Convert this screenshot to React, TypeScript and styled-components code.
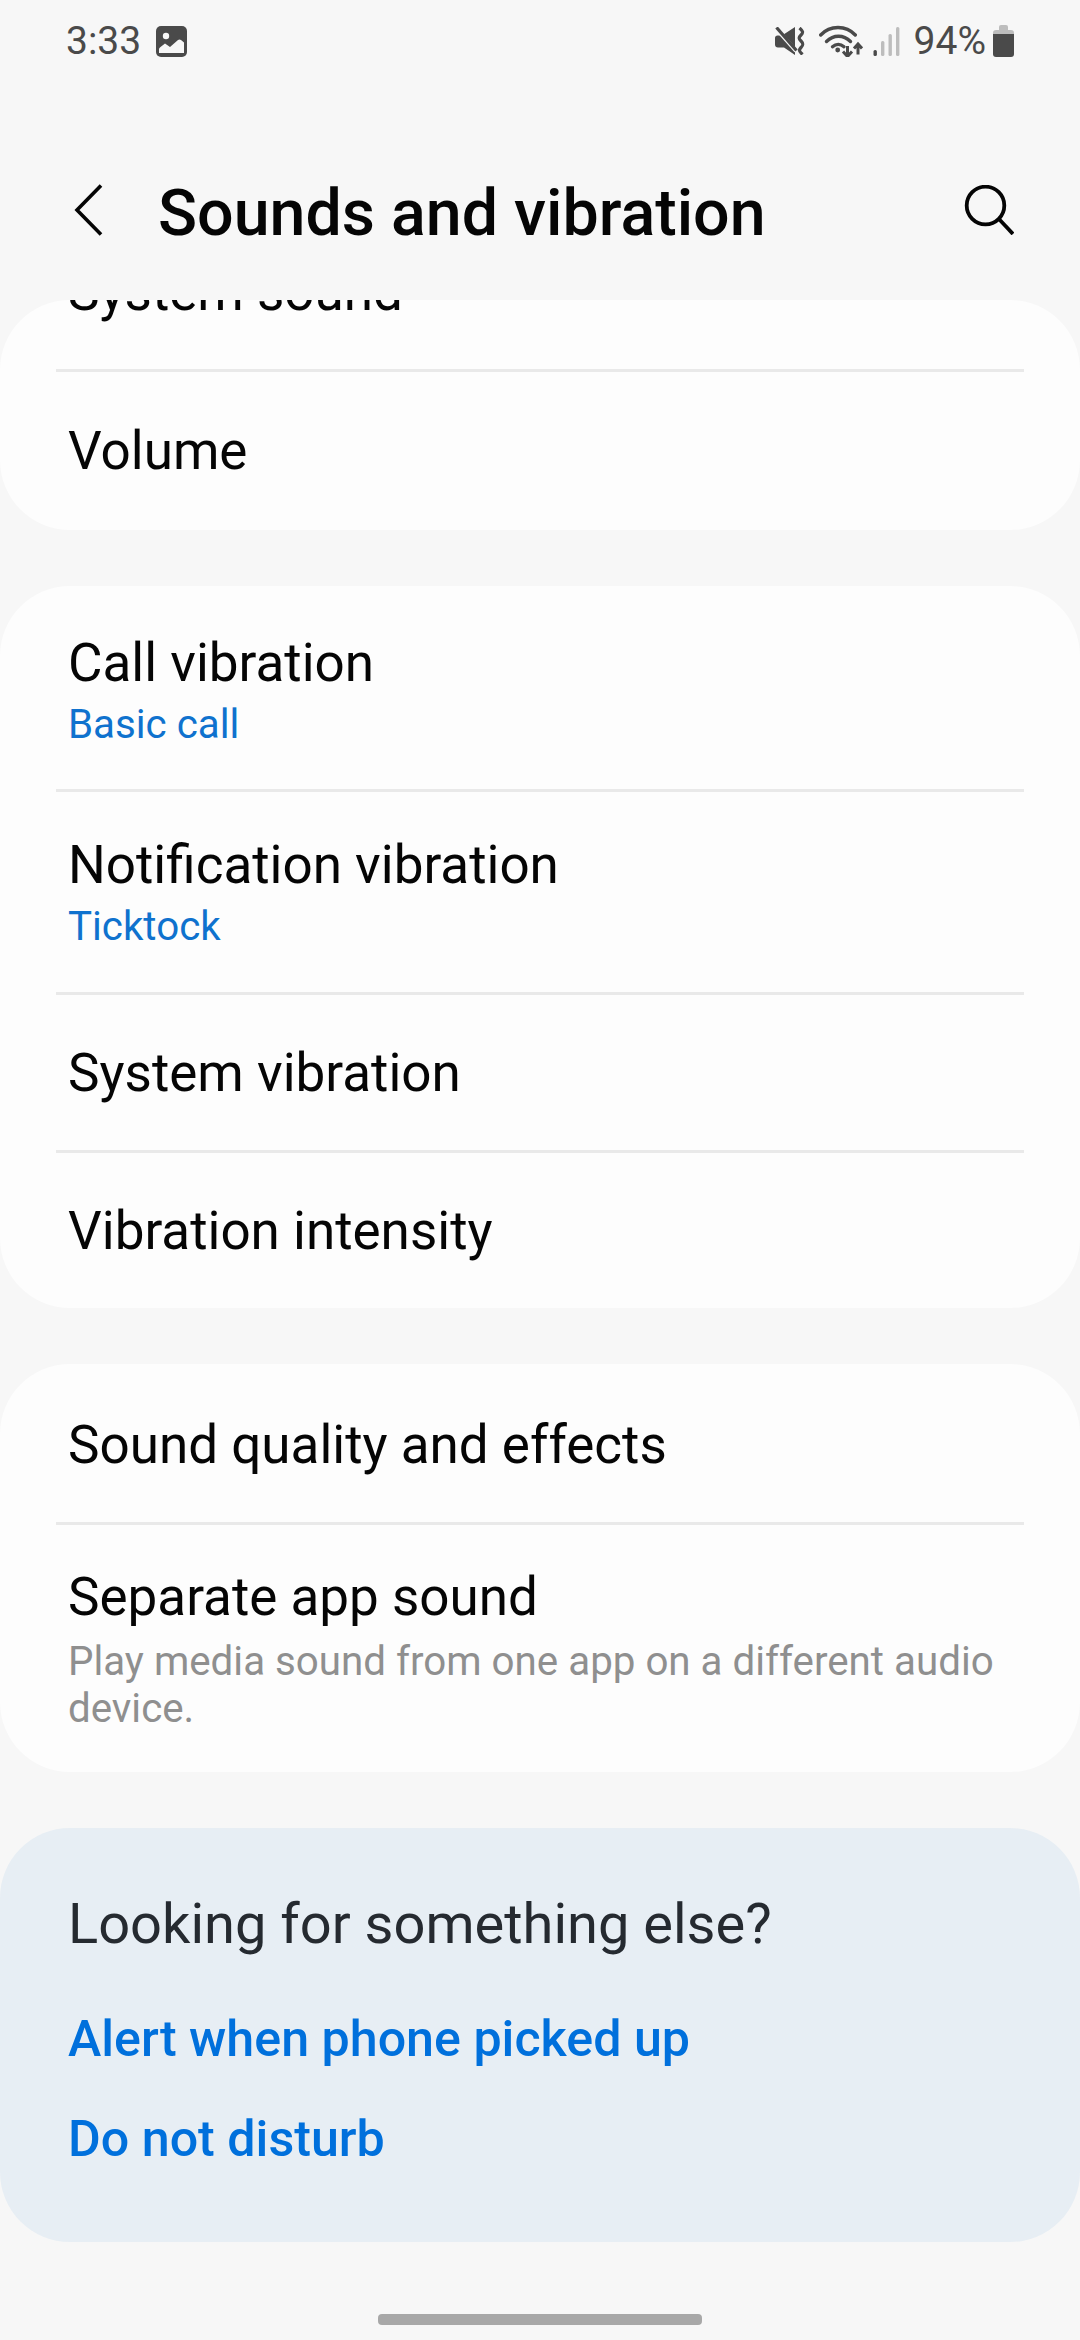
import React from "react";
import styled, { createGlobalStyle } from "styled-components";

const Global = createGlobalStyle`
  html, body { margin: 0; padding: 0; background: #f7f7f7; }
  * { box-sizing: border-box; }
`;

const Page = styled.div`
  width: 1080px;
  height: 2340px;
  overflow: hidden;
  background: #f7f7f7;
  font-family: Roboto, "Noto Sans", sans-serif;
  color: #050505;
  display: flex;
  flex-direction: column;
`;

const StatusBar = styled.div`
  height: 82px;
  padding: 0 66px 0 66px;
  display: flex;
  align-items: center;
  justify-content: space-between;
  color: #4a4a4a;
  font-size: 39px;
`;

const StatusGroup = styled.div`
  display: flex;
  align-items: center;
`;

const StatusIcon = styled.svg<{ $ml?: number }>`
  display: block;
  flex-shrink: 0;
  margin-left: ${(p) => p.$ml ?? 0}px;
`;

const Percent = styled.span`
  margin-left: 14px;
`;

const Header = styled.div`
  height: 218px;
  padding: 38px 66px 0 74px;
  display: flex;
  align-items: center;
`;

const Title = styled.h1`
  margin: 6px 0 0 54px;
  flex: 1;
  font-size: 64.5px;
  line-height: 76px;
  font-weight: 500;
`;

const Cards = styled.div`
  display: flex;
  flex-direction: column;
  gap: 56px;
`;

const Card = styled.div<{ $tint?: boolean }>`
  background: ${(p) => (p.$tint ? "#e7eef4" : "#fdfdfd")};
  border-radius: 70px;
  overflow: hidden;
`;

const Row = styled.div<{ $h: number; $pt?: number }>`
  height: ${(p) => p.$h}px;
  padding: ${(p) => p.$pt ?? 0}px 40px 0 68px;
  display: flex;
  flex-direction: column;
  justify-content: center;
`;

const ClippedRow = styled.div`
  height: 69px;
  padding: 0 0 47px 68px;
  display: flex;
  flex-direction: column;
  justify-content: flex-end;
  overflow: hidden;
`;

const Divider = styled.div`
  height: 3px;
  margin: 0 56px;
  background: #e9e9e9;
`;

const Label = styled.div`
  flex-shrink: 0;
  font-size: 53px;
  line-height: 60px;
`;

const Sub = styled.div`
  font-size: 40.3px;
  line-height: 46px;
  color: #0f72ce;
  margin-top: 9px;
`;

const Desc = styled.div`
  font-size: 40.3px;
  line-height: 47px;
  color: #8f8f8f;
  margin-top: 11px;
`;

const Looking = styled.div`
  padding: 66px 68px 0;
  font-size: 56px;
  line-height: 60px;
  color: #252a30;
`;

const LinkList = styled.div`
  padding: 55px 68px 73px;
  display: flex;
  flex-direction: column;
  gap: 40px;
`;

const Link = styled.div`
  font-size: 50.2px;
  line-height: 60px;
  font-weight: 500;
  color: #0070dc;
`;

const HomeBar = styled.div`
  flex-shrink: 0;
  width: 324px;
  height: 11px;
  margin: 72px auto 0;
  border-radius: 4px;
  background: #a8a8a8;
`;

const GalleryIcon = () => (
  <StatusIcon $ml={15} width="31" height="31" viewBox="0 0 31 31">
    <rect width="31" height="31" rx="5" fill="#4a4a4a" />
    <circle cx="10" cy="10" r="3.200" fill="#f7f7f7" />
    <path d="M3 27v-3.500c0-1 .5-1.700 1.200-2.300L9 17.500l5 3.500 8-7c1-.7 2-.7 3 0l3 2.500V27z" fill="#f7f7f7" />
  </StatusIcon>
);

const MuteIcon = () => (
  <StatusIcon width="30" height="28" viewBox="0 0 30 28">
    <path d="M0 11c0-1.500 1-2.500 2.500-2.500H7L20 0v28L9 20.500H3c-1.800 0-3-1.200-3-3z" fill="#4a4a4a" />
    <path d="M-1 -1l22 25" stroke="#f7f7f7" strokeWidth="4" />
    <path d="M1.500 0.500l20 23" stroke="#4a4a4a" strokeWidth="3.200" />
    <path d="M24.500 1c3.500 3 4 4.500 1.500 7s-2.500 3.500 0 6 2.500 4 0 6.500-2 3.500 1.500 7" stroke="#4a4a4a" strokeWidth="3.200" fill="none" />
  </StatusIcon>
);

const WifiIcon = () => (
  <StatusIcon $ml={14} width="44" height="32" viewBox="0 0 44 32">
    <g fill="none" stroke="#4a4a4a" strokeWidth="3.400" strokeLinecap="round">
      <path d="M1.700 10C11 0 27 0 36.300 10" />
      <path d="M7.500 16.500c7-7 17-7 24 0" />
      <path d="M13.500 21.700c3.500-3 8-3 11.500 0" />
    </g>
    <circle cx="18.700" cy="25" r="2.400" fill="#4a4a4a" />
    <path d="M28.500 21v10M24 26.500l4.500 5 4.500-5M39 29.500V19.500M35 23.500l4-4.500 4 4.500" stroke="#4a4a4a" strokeWidth="3" fill="none" />
  </StatusIcon>
);

const SignalIcon = () => (
  <StatusIcon $ml={10} width="27" height="29" viewBox="0 0 27 29">
    <rect x="0.500" y="23" width="3.400" height="6" rx="1.500" fill="#4a4a4a" />
    <rect x="8" y="14" width="3.400" height="15" rx="1.500" fill="#bdbdbd" />
    <rect x="15.500" y="7" width="3.400" height="22" rx="1.500" fill="#bdbdbd" />
    <rect x="23" y="0" width="3.400" height="29" rx="1.500" fill="#bdbdbd" />
  </StatusIcon>
);

const BatteryIcon = () => (
  <StatusIcon $ml={7} width="21" height="32" viewBox="0 0 21 32">
    <path d="M6 2a2 2 0 0 1 2-2h5a2 2 0 0 1 2 2v3h3a3 3 0 0 1 3 3v2H0V8a3 3 0 0 1 3-3h3z" fill="#bdbdbd" />
    <path d="M0 9h21v20a3 3 0 0 1-3 3H3a3 3 0 0 1-3-3z" fill="#4a4a4a" />
  </StatusIcon>
);

const BackIcon = () => (
  <StatusIcon width="30" height="52" viewBox="0 0 30 52">
    <path d="M27 1.500L3 26l24 24.500" fill="none" stroke="#050505" strokeWidth="3.600" />
  </StatusIcon>
);

const SearchIcon = () => (
  <StatusIcon width="50" height="50" viewBox="0 0 50 50">
    <circle cx="21.500" cy="20.500" r="18.800" fill="none" stroke="#050505" strokeWidth="3.800" />
    <path d="M34 33l15 16" stroke="#050505" strokeWidth="3.800" fill="none" />
  </StatusIcon>
);

const App: React.FC = () => (
  <Page>
    <Global />
    <StatusBar>
      <StatusGroup>
        3:33
        <GalleryIcon />
      </StatusGroup>
      <StatusGroup>
        <MuteIcon />
        <WifiIcon />
        <SignalIcon />
        <Percent>94%</Percent>
        <BatteryIcon />
      </StatusGroup>
    </StatusBar>
    <Header>
      <BackIcon />
      <Title>Sounds and vibration</Title>
      <SearchIcon />
    </Header>
    <Cards>
      <Card>
        <ClippedRow>
          <Label>System sound</Label>
        </ClippedRow>
        <Divider />
        <Row $h={158}>
          <Label>Volume</Label>
        </Row>
      </Card>
      <Card>
        <Row $h={203} $pt={5}>
          <Label>Call vibration</Label>
          <Sub>Basic call</Sub>
        </Row>
        <Divider />
        <Row $h={200}>
          <Label>Notification vibration</Label>
          <Sub>Ticktock</Sub>
        </Row>
        <Divider />
        <Row $h={155}>
          <Label>System vibration</Label>
        </Row>
        <Divider />
        <Row $h={155}>
          <Label>Vibration intensity</Label>
        </Row>
      </Card>
      <Card>
        <Row $h={158} $pt={3}>
          <Label>Sound quality and effects</Label>
        </Row>
        <Divider />
        <Row $h={247} $pt={2}>
          <Label>Separate app sound</Label>
          <Desc>Play media sound from one app on a different audio device.</Desc>
        </Row>
      </Card>
      <Card $tint>
        <Looking>Looking for something else?</Looking>
        <LinkList>
          <Link>Alert when phone picked up</Link>
          <Link>Do not disturb</Link>
        </LinkList>
      </Card>
    </Cards>
    <HomeBar />
  </Page>
);

export default App;
